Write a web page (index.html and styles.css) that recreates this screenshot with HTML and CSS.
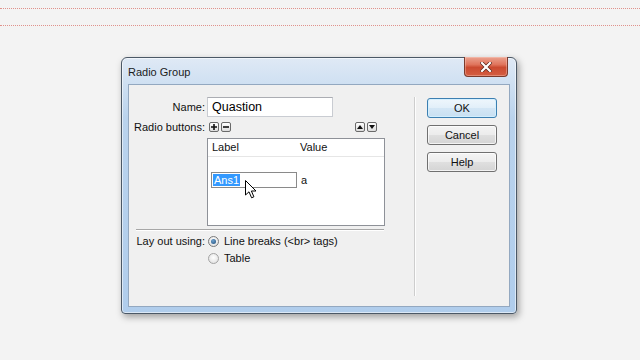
FILE: index.html
```html
<!DOCTYPE html>
<html>
<head>
<meta charset="utf-8">
<title>Radio Group</title>
<link rel="stylesheet" href="styles.css">
</head>
<body>
<div class="guides"><div class="guide"></div><div class="guide guide-2"></div></div>
<div class="dialog">
  <div class="titlebar">
    <span class="title">Radio Group</span>
    <div class="close">
      <svg width="12" height="10" viewBox="0 0 12 10"><path d="M2 1 L10 9 M10 1 L2 9" stroke="#5a2418" stroke-width="3.6" stroke-linecap="square"/><path d="M2 1 L10 9 M10 1 L2 9" stroke="#fff" stroke-width="2.2" stroke-linecap="square"/></svg>
    </div>
  </div>
  <div class="client">
    <div class="form">
      <div class="row name-row">
        <span class="lbl">Name:</span>
        <div class="field">Quastion</div>
      </div>
      <div class="row rb-row">
        <span class="lbl">Radio buttons:</span>
        <div class="tools">
          <span class="tbtn"><svg width="8" height="8" viewBox="0 0 8 8"><path d="M4 1 V7 M1 4 H7" stroke="#111" stroke-width="1.6"/></svg></span>
          <span class="tbtn"><svg width="8" height="8" viewBox="0 0 8 8"><path d="M1 4 H7" stroke="#111" stroke-width="1.6"/></svg></span>
          <span class="spacer"></span>
          <span class="tbtn"><svg width="8" height="8" viewBox="0 0 8 8"><path d="M1 6 L4 2 L7 6 Z" fill="#111"/></svg></span>
          <span class="tbtn"><svg width="8" height="8" viewBox="0 0 8 8"><path d="M1 2 L4 6 L7 2 Z" fill="#111"/></svg></span>
        </div>
      </div>
      <div class="row list-row">
        <span></span>
        <div class="list">
          <div class="list-head"><span class="col-label">Label</span><span class="col-value">Value</span></div>
          <div class="list-item">
            <div class="edit"><span class="sel">Ans1</span></div>
            <span class="val">a</span>
          </div>
          <svg class="cursor" width="12" height="19" viewBox="0 0 12 19"><path d="M0.5 0.5 L0.5 15 L4 11.8 L6.6 17.8 L8.9 16.8 L6.4 11 L11 11 Z" fill="#fff" stroke="#000" stroke-width="1" stroke-linejoin="round"/></svg>
        </div>
      </div>
      <div class="sep"></div>
      <div class="row opt-row">
        <span class="lbl">Lay out using:</span>
        <div class="opt"><span class="radio on"></span><span>Line breaks (&lt;br&gt; tags)</span></div>
      </div>
      <div class="row opt-row opt-2">
        <span></span>
        <div class="opt"><span class="radio"></span><span>Table</span></div>
      </div>
    </div>
    <div class="vsep"></div>
    <div class="buttons">
      <div class="btn default">OK</div>
      <div class="btn">Cancel</div>
      <div class="btn">Help</div>
    </div>
  </div>
</div>
</body>
</html>
```

FILE: styles.css
```css
* { box-sizing: border-box; }
html, body {
  margin: 0;
  width: 640px;
  height: 360px;
  overflow: hidden;
  background: #f3f3f3;
  font-family: "Liberation Sans", Arial, sans-serif;
  font-size: 11px;
  color: #111;
}
.guides { padding-top: 8px; }
.guide { border-top: 1px dotted #e0928c; height: 0; }
.guide-2 { margin-top: 16px; }

.dialog {
  margin-top: 31px;
  margin-left: 121px;
  width: 396px;
  height: 257px;
  border: 1px solid #4b5866;
  border-radius: 6px 6px 4px 4px;
  background: linear-gradient(180deg, #dfe9f5 0px, #cfe0f2 26px, #bad3ed 60px, #b0cdec 100%);
  box-shadow: 2px 3px 7px rgba(0,0,0,0.35), inset 0 0 0 1px rgba(255,255,255,0.55);
  display: flex;
  flex-direction: column;
}
.titlebar {
  height: 26px;
  display: flex;
  justify-content: space-between;
  align-items: flex-start;
  padding: 0 8px 0 6px;
}
.title {
  padding-top: 7px;
  line-height: 14px;
  font-size: 11px;
  color: #1b1b1b;
}
.close {
  margin-top: -1px;
  width: 44px;
  height: 20px;
  border: 1px solid #7b3a2c;
  border-top: none;
  border-radius: 0 0 4px 4px;
  background: linear-gradient(180deg, #eba28f 0%, #e0745c 40%, #cb4a30 55%, #d45e42 100%);
  box-shadow: inset 0 0 0 1px rgba(255,220,210,0.35);
  display: flex;
  align-items: center;
  justify-content: center;
}
.client {
  margin: 0 6px;
  height: 223px;
  border: 1px solid #93a8c0;
  background: #f0f0f0;
  display: flex;
}
.form {
  width: 285px;
  padding-top: 12px;
  display: flex;
  flex-direction: column;
}
.row {
  display: grid;
  grid-template-columns: 76px 1fr;
  column-gap: 2px;
  align-items: center;
}
.lbl { text-align: right; white-space: nowrap; }
.field {
  width: 126px;
  height: 20px;
  background: #fff;
  border: 1px solid #c9ccd2;
  border-top-color: #abadb3;
  padding-left: 4px;
  font-size: 12.5px;
  line-height: 18px;
  color: #000;
}
.rb-row { margin-top: 2px; height: 16px; }
.tools {
  width: 178px;
  display: flex;
  align-items: center;
  gap: 2px;
  padding-left: 2px;
  padding-right: 8px;
}
.spacer { flex: 1; }
.tbtn {
  width: 10px;
  height: 10px;
  border: 1px solid #6a6a6a;
  border-radius: 2px;
  background: linear-gradient(#ffffff, #dcdcdc);
  display: flex;
  align-items: center;
  justify-content: center;
}
.tbtn svg { display: block; }
.list-row { margin-top: 3px; }
.list {
  position: relative;
  width: 178px;
  height: 88px;
  background: #fff;
  border: 1px solid #8e9198;
}
.list-head {
  height: 18px;
  line-height: 17px;
  border-bottom: 1px solid #e6e6e6;
  padding-left: 4px;
  display: flex;
}
.col-label { width: 88px; }
.list-item {
  margin-top: 15px;
  padding-left: 3px;
  display: flex;
  align-items: center;
  gap: 4px;
}
.edit {
  width: 86px;
  height: 16px;
  border: 1px solid #8a8a8a;
  background: #fff;
  padding-left: 1px;
  display: flex;
  align-items: center;
}
.sel {
  background: #3399ff;
  color: #fff;
  line-height: 12px;
  padding: 0 1px 0 1px;
}
.val { line-height: 16px; }
.cursor {
  position: absolute;
  left: 37px;
  top: 41px;
}
.sep {
  margin-top: 3px;
  margin-left: 7px;
  width: 248px;
  height: 2px;
  border-top: 1px solid #a7a7a7;
  border-bottom: 1px solid #ffffff;
}
.opt-row { margin-top: 2px; height: 16px; }
.opt-2 { margin-top: 1px; }
.opt {
  display: flex;
  align-items: center;
  gap: 5px;
  padding-left: 1px;
}
.radio {
  width: 11px;
  height: 11px;
  border-radius: 50%;
  border: 1px solid #a3a3a3;
  background: radial-gradient(circle at 50% 40%, #ffffff 0%, #e6e6e6 70%, #d6d6d6 100%);
  position: relative;
}
.radio.on { border-color: #7a7a7a; }
.radio.on::after {
  content: "";
  position: absolute;
  left: 2px;
  top: 2px;
  width: 5px;
  height: 5px;
  border-radius: 50%;
  background: radial-gradient(circle at 40% 35%, #6fa2cf, #1d4c78);
}
.vsep {
  margin-top: 12px;
  height: 199px;
  width: 2px;
  border-left: 1px solid #cdcdcd;
  border-right: 1px solid #fdfdfd;
}
.buttons {
  padding-top: 13px;
  padding-left: 11px;
  display: flex;
  flex-direction: column;
  gap: 7px;
}
.btn {
  width: 70px;
  height: 20px;
  border: 1px solid #707070;
  border-radius: 3px;
  background: linear-gradient(180deg, #f4f4f4 0%, #ececec 48%, #dfdfdf 52%, #d4d4d4 100%);
  box-shadow: inset 0 0 0 1px rgba(255,255,255,0.7);
  text-align: center;
  line-height: 18px;
  color: #111;
}
.btn.default {
  border-color: #3c7fb1;
  background: linear-gradient(180deg, #eef6fc 0%, #e2eff9 48%, #d3e6f5 52%, #c8e0f2 100%);
  box-shadow: inset 0 0 0 1px rgba(210,240,255,0.9);
}
```
